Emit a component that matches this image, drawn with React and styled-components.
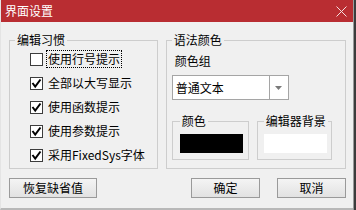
import React from "react";
import styled, { createGlobalStyle } from "styled-components";

const Global = createGlobalStyle`
  html, body { margin: 0; padding: 0; background: #f0f0f0; }
  body { font-family: "Noto Sans CJK SC", "Noto Sans", sans-serif; font-size: 12px; color: #000; }
`;

const Screen = styled.div`
  width: 356px;
  height: 210px;
  display: flex;
  overflow: hidden;
`;

const Dialog = styled.div`
  width: 353px;
  height: 210px;
  display: flex;
  flex-direction: column;
  background: #f0f0f0;
  box-sizing: border-box;
  border-left: 1px solid #e4e4e4;
  border-bottom: 2px solid #b8b8b8;
`;

const Edge = styled.div`
  width: 3px;
  height: 210px;
  background: linear-gradient(to right, #9a9a9a 0, #9a9a9a 1px, #3c3c3c 1px);
`;

const TitleBar = styled.div`
  height: 22px;
  flex: none;
  background: #b92d32;
  display: flex;
  align-items: center;
  justify-content: space-between;
  padding: 0 4px 0 4px;
  color: #fff;
  font-size: 12px;
  line-height: 22px;
`;

const Body = styled.div`
  flex: 1;
  display: flex;
  flex-direction: column;
  padding: 11px 7px 0 8px;
`;

const Groups = styled.div`
  display: flex;
  gap: 8px;
  height: 136px;
`;

const Group = styled.fieldset`
  margin: 0;
  padding: 0 0 0 ${(p) => p.$padLeft || 0}px;
  border: 1px solid #cdcdcd;
  width: ${(p) => p.$w}px;
  box-sizing: border-box;
  display: flex;
  flex-direction: column;
  min-width: 0;
`;

const Legend = styled.legend`
  margin-left: ${(p) => p.$ml ?? 5}px;
  padding: 0 2px;
  line-height: 14px;
  font-size: 12px;
  white-space: nowrap;
`;

const CheckRow = styled.label`
  height: 24px;
  display: flex;
  align-items: center;
  padding-left: 20px;
  gap: 5px;
`;

const Box = styled.span`
  width: 13px;
  height: 13px;
  box-sizing: border-box;
  border: 1px solid #3c3c3c;
  background: #fff;
  display: flex;
  align-items: center;
  justify-content: center;
`;

const LabelText = styled.span`
  line-height: 14px;
  padding: 1px 1px;
  border: 1px dotted ${(p) => (p.$focus ? "#000" : "transparent")};
  margin-left: -2px;
`;

const FieldLabel = styled.div`
  margin: 7px 0 0 3px;
  line-height: 14px;
`;

const Select = styled.div`
  margin-top: 7px;
  width: 117px;
  height: 25px;
  box-sizing: border-box;
  border: 1px solid #a5a5a5;
  background: #fff;
  display: flex;
`;

const SelectText = styled.div`
  flex: 1;
  padding-left: 3px;
  line-height: 23px;
`;

const SelectArrow = styled.div`
  width: 18px;
  border-left: 1px solid #a5a5a5;
  display: flex;
  align-items: center;
  justify-content: center;
`;

const SubRow = styled.div`
  margin-top: 14px;
  display: flex;
  gap: 8px;
`;

const SubGroup = styled.fieldset`
  margin: 0;
  padding: 6px ${(p) => p.$pr}px 6px ${(p) => p.$pl}px;
  border: 1px solid #cdcdcd;
  width: ${(p) => p.$w}px;
  box-sizing: border-box;
  min-width: 0;
`;

const Swatch = styled.div`
  height: 19px;
  background: ${(p) => p.$color};
`;

const ButtonRow = styled.div`
  margin-top: 9px;
  display: flex;
  align-items: center;
`;

const Button = styled.div`
  width: ${(p) => p.$w}px;
  height: 20px;
  box-sizing: border-box;
  border: 1px solid #9a9a9a;
  background: linear-gradient(#f4f4f4, #e2e2e2);
  display: flex;
  align-items: center;
  justify-content: center;
  line-height: 14px;
  margin-left: ${(p) => p.$ml || 0}px;
`;

const Spacer = styled.div`
  flex: 1;
`;

const Check = () => (
  <svg width="11" height="11" viewBox="0 0 11 11">
    <path d="M1.5 5 L4.2 8.5 L9.5 1.5" fill="none" stroke="#000" strokeWidth="2" />
  </svg>
);

const Item = ({ checked, focus, children }) => (
  <CheckRow>
    <Box>{checked && <Check />}</Box>
    <LabelText $focus={focus}>{children}</LabelText>
  </CheckRow>
);

export default function App() {
  return (
    <>
      <Global />
      <Screen>
        <Dialog>
          <TitleBar>
            <span>界面设置</span>
            <svg width="11" height="11" viewBox="0 0 11 11" style={{ marginRight: 2 }}>
              <path d="M0.5 0.5 L10.5 10.5 M10.5 0.5 L0.5 10.5" stroke="#fff" strokeWidth="1" opacity="0.85" />
            </svg>
          </TitleBar>
          <Body>
            <Groups>
              <Group $w={152}>
                <Legend>编辑习惯</Legend>
                <Item focus>使用行号提示</Item>
                <Item checked>全部以大写显示</Item>
                <Item checked>使用函数提示</Item>
                <Item checked>使用参数提示</Item>
                <Item checked>采用FixedSys字体</Item>
              </Group>
              <Group $w={184} $padLeft={5}>
                <Legend $ml={0}>语法颜色</Legend>
                <FieldLabel>颜色组</FieldLabel>
                <Select>
                  <SelectText>普通文本</SelectText>
                  <SelectArrow>
                    <svg width="7" height="4" viewBox="0 0 7 4">
                      <path d="M0 0 H7 L3.5 4 Z" fill="#7a7a7a" />
                    </svg>
                  </SelectArrow>
                </Select>
                <SubRow>
                  <SubGroup $w={77} $pl={7} $pr={5}>
                    <Legend $ml={0}>颜色</Legend>
                    <Swatch $color="#000" />
                  </SubGroup>
                  <SubGroup $w={75} $pl={6} $pr={4}>
                    <Legend $ml={0}>编辑器背景</Legend>
                    <Swatch $color="#fff" />
                  </SubGroup>
                </SubRow>
              </Group>
            </Groups>
            <ButtonRow>
              <Button $w={88}>恢复缺省值</Button>
              <Spacer />
              <Button $w={69}>确定</Button>
              <Button $w={69} $ml={17}>取消</Button>
            </ButtonRow>
          </Body>
        </Dialog>
        <Edge />
      </Screen>
    </>
  );
}
